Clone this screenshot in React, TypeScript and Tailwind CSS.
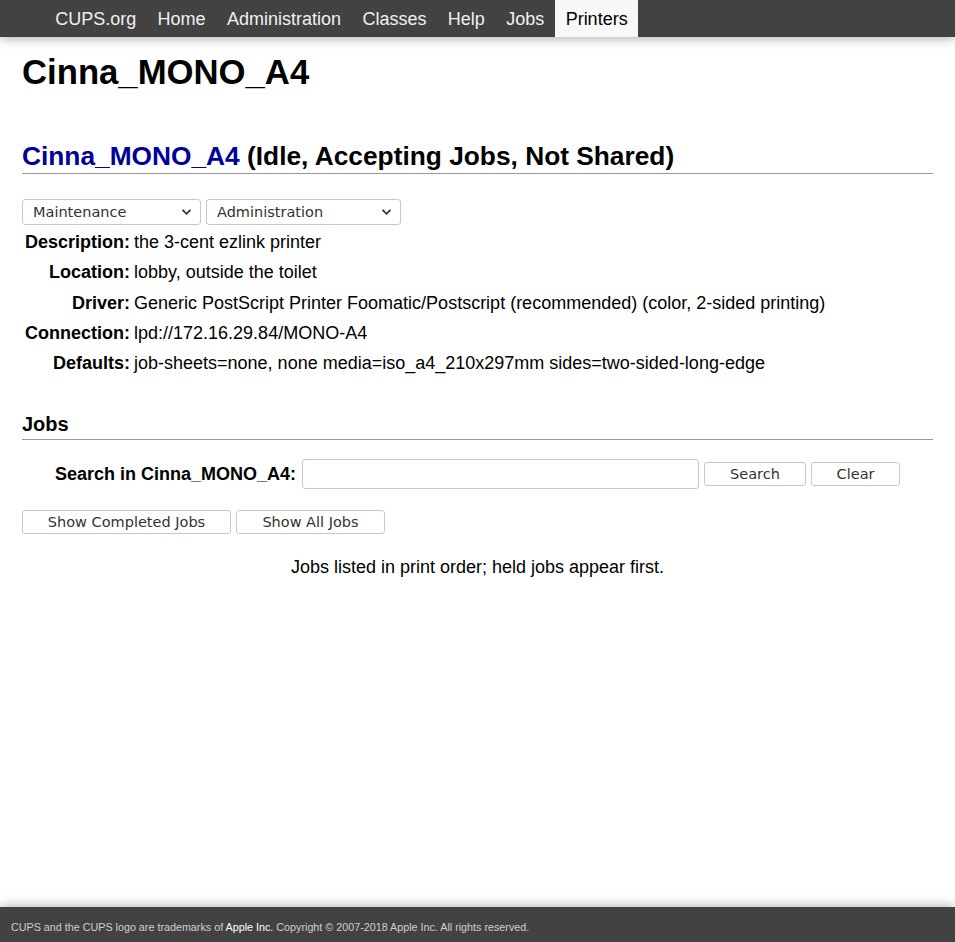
import React from "react";

const navItems = ["CUPS.org", "Home", "Administration", "Classes", "Help", "Jobs"];

const rows: [string, string][] = [
  ["Description:", "the 3-cent ezlink printer"],
  ["Location:", "lobby, outside the toilet"],
  ["Driver:", "Generic PostScript Printer Foomatic/Postscript (recommended) (color, 2-sided printing)"],
  ["Connection:", "lpd://172.16.29.84/MONO-A4"],
  ["Defaults:", "job-sheets=none, none media=iso_a4_210x297mm sides=two-sided-long-edge"],
];

function Chevron() {
  return (
    <svg
      className="pointer-events-none absolute right-[9px] top-[9px]"
      width="11"
      height="8"
      viewBox="0 0 11 8"
      fill="none"
    >
      <path d="M1.5 1.8 L5.5 5.8 L9.5 1.8" stroke="#333" strokeWidth="1.8" />
    </svg>
  );
}

function FakeSelect({ label, width }: { label: string; width: string }) {
  return (
    <div className={`relative ${width}`}>
      <select
        className="h-[26px] w-full appearance-none rounded-[3px] border border-[#c8c8c8] bg-white pl-[10px] pt-[1px] text-[14.5px] text-[#333] outline-none"
        style={{ fontFamily: '"DejaVu Sans", sans-serif' }}
        defaultValue={label}
      >
        <option>{label}</option>
      </select>
      <Chevron />
    </div>
  );
}

export default function App() {
  const ctrl = { fontFamily: '"DejaVu Sans", sans-serif' };
  return (
    <div
      className="flex min-h-screen flex-col bg-white text-black"
      style={{ fontFamily: '"Liberation Sans", Arial, sans-serif' }}
    >
      <nav className="relative z-10 flex h-[37px] bg-[#424242] pl-[44.5px] shadow-[0_2px_10px_rgba(0,0,0,0.3)]">
        {navItems.map((n) => (
          <a key={n} className="px-[10.7px] pt-[2px] text-[18px] leading-[35px] text-[#f0f0f0]">
            {n}
          </a>
        ))}
        <a className="bg-[#f8f8f8] px-[10.7px] pt-[2px] text-[18px] leading-[35px] text-black">Printers</a>
      </nav>

      <main className="flex-1 px-[22px]">
        <h1 className="mt-[15px] text-[34.7px] font-bold leading-[40px]">Cinna_MONO_A4</h1>

        <h2 className="mt-[49px] border-b border-[#999] pb-[2px] text-[26.3px] font-bold leading-[30px]">
          <a className="text-[#00009a]">Cinna_MONO_A4</a> (Idle, Accepting Jobs, Not Shared)
        </h2>

        <div className="mt-[25px] flex gap-[5px]">
          <FakeSelect label="Maintenance" width="w-[179px]" />
          <FakeSelect label="Administration" width="w-[195px]" />
        </div>

        <div className="mt-[2px] grid grid-cols-[auto_1fr] gap-x-[4px] text-[18px] leading-[30.25px]">
          {rows.map(([k, v]) => (
            <React.Fragment key={k}>
              <div className="pl-[3px] text-right font-bold">{k}</div>
              <div>{v}</div>
            </React.Fragment>
          ))}
        </div>

        <h3 className="mt-[34px] border-b border-[#999] pb-[3px] text-[20px] font-bold leading-[24px]">Jobs</h3>

        <div className="mt-[19px] flex items-center justify-center">
          <span className="text-[18px] font-bold">Search in Cinna_MONO_A4:</span>
          <input
            type="text"
            className="ml-[6px] h-[30px] w-[397px] rounded-[3px] border border-[#c8c8c8] bg-white outline-none"
          />
          <button
            className="ml-[5px] h-[24px] w-[102px] rounded-[3px] border border-[#c8c8c8] bg-white pt-[1px] text-[14.5px] text-[#333]"
            style={ctrl}
          >
            Search
          </button>
          <button
            className="ml-[5px] h-[24px] w-[89px] rounded-[3px] border border-[#c8c8c8] bg-white pt-[1px] text-[14.5px] text-[#333]"
            style={ctrl}
          >
            Clear
          </button>
        </div>

        <div className="mt-[21px] flex gap-[5px]">
          <button
            className="h-[24px] w-[209px] rounded-[3px] border border-[#c8c8c8] bg-white pt-[1px] text-[14.5px] text-[#333]"
            style={ctrl}
          >
            Show Completed Jobs
          </button>
          <button
            className="h-[24px] w-[149px] rounded-[3px] border border-[#c8c8c8] bg-white pt-[1px] text-[14.5px] text-[#333]"
            style={ctrl}
          >
            Show All Jobs
          </button>
        </div>

        <p className="mt-[23px] text-center text-[18px] leading-[21px]">
          Jobs listed in print order; held jobs appear first.
        </p>
      </main>

      <footer className="relative h-[35px] bg-[#424242] pl-[11px] pt-[14px] text-[10.75px] leading-[12px] text-[#cfcfcf] shadow-[0_-2px_10px_rgba(0,0,0,0.25)]">
        CUPS and the CUPS logo are trademarks of <a className="text-white">Apple Inc.</a> Copyright © 2007-2018 Apple Inc. All rights reserved.
      </footer>
    </div>
  );
}
